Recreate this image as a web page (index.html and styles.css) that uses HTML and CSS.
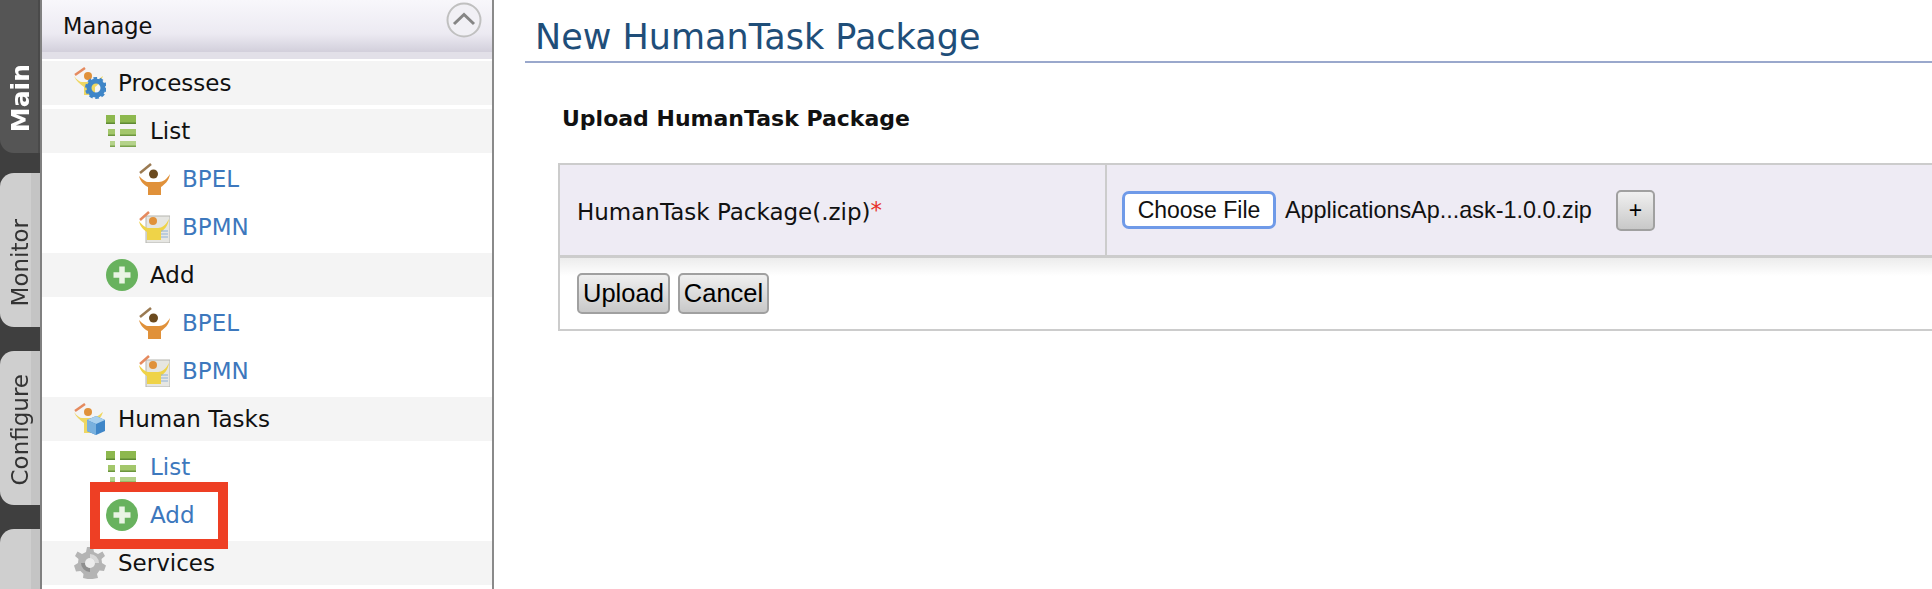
FILE: index.html
```html
<!DOCTYPE html>
<html lang="en">
<head>
    <meta charset="UTF-8">
    <meta name="viewport" content="width=device-width, initial-scale=1.0">
    <title>New HumanTask Package</title>
    <link rel="stylesheet" href="styles.css">
</head>
<body>
    <svg class="defs" width="0" height="0" aria-hidden="true">
        <defs>
            <symbol id="i-list" viewBox="0 0 32 32">
                <rect x="0" y="0" width="9" height="9" fill="#8db84e"/>
                <rect x="14" y="0" width="16" height="9" fill="#8db84e"/>
                <rect x="0" y="7.500" width="9" height="1.500" fill="#5f8a35"/>
                <rect x="14" y="7.500" width="16" height="1.500" fill="#5f8a35"/>
                <rect x="2" y="14" width="7" height="7" fill="#a3c76b"/>
                <rect x="14" y="14" width="16" height="7" fill="#a3c76b"/>
                <rect x="2" y="19.500" width="7" height="1.500" fill="#6c963e"/>
                <rect x="14" y="19.500" width="16" height="1.500" fill="#6c963e"/>
                <rect x="4" y="26" width="5" height="6" fill="#b4d28a"/>
                <rect x="14" y="26" width="16" height="6" fill="#b4d28a"/>
                <rect x="4" y="30.500" width="5" height="1.500" fill="#7ba34d"/>
                <rect x="14" y="30.500" width="16" height="1.500" fill="#7ba34d"/>
            </symbol>
            <symbol id="i-add" viewBox="0 0 32 32">
                <circle cx="16" cy="16" r="16" fill="#68b25e"/>
                <path d="M16 7.500V24.500M7.500 16H24.500" stroke="#e9f4e4" stroke-width="5.500"/>
            </symbol>
            <symbol id="i-bpel" viewBox="0 0 32 32">
                <path d="M2 10L13 1" stroke="#9a7a52" stroke-width="2.500"/>
                <circle cx="15.500" cy="11" r="4.500" fill="#6b4a1e"/>
                <path d="M1 13C5 17 8 19 10 19H21C25 19 29 16 32 11C31 18 26 22 23 24V32H10V24C6 22 2 18 1 13Z" fill="#e0913a"/>
            </symbol>
            <symbol id="i-bpmn" viewBox="0 0 32 32">
                <rect x="8" y="5" width="24" height="27" fill="#e6e6e2" stroke="#b5b5b0"/>
                <path d="M2 9L11 1" stroke="#e58a5e" stroke-width="2.500"/>
                <circle cx="15" cy="10" r="4" fill="#e0913a"/>
                <path d="M1 10C4 14 8 17 10 17H20C24 17 28 14 31 8C30 15 26 19 23 21V29H9V21C6 19 2 16 1 10Z" fill="#efd348"/>
                <path d="M23 20H30M23 23H30M23 26H30" stroke="#8fb2d6" stroke-width="1.200"/>
            </symbol>
            <symbol id="i-proc" viewBox="0 0 32 32">
                <path d="M1 8L11 1" stroke="#e58a5e" stroke-width="2.500"/>
                <circle cx="14" cy="9" r="4" fill="#e0913a"/>
                <path d="M0 9C3 13 6 15 8 15H18C22 15 25 12 29 9C27 15 24 18 21 20V28H10V20C6 17 2 14 0 9Z" fill="#efd761"/>
                <circle cx="22" cy="21" r="7" fill="none" stroke="#3f86c8" stroke-width="5"/>
                <circle cx="22" cy="21" r="9.500" fill="none" stroke="#3f86c8" stroke-width="3" stroke-dasharray="3.500 2.500"/>
            </symbol>
            <symbol id="i-task" viewBox="0 0 32 32">
                <path d="M1 8L11 1" stroke="#e58a5e" stroke-width="2.500"/>
                <circle cx="14" cy="9" r="4" fill="#e0913a"/>
                <path d="M0 9C3 13 6 15 8 15H18C22 15 25 12 29 9C27 15 24 18 21 20V30H10V20C6 17 2 14 0 9Z" fill="#efd761"/>
                <path d="M22 13L31 17V28L22 32L13 28V17Z" fill="#3f86c8"/>
                <path d="M22 13L31 17L22 21L13 17Z" fill="#a9d0ee"/>
                <path d="M13 17L22 21V32L13 28Z" fill="#78b0de"/>
            </symbol>
            <symbol id="i-gear" viewBox="0 0 32 32">
                <path d="M13 0H19L20 5L24 7L28.500 4.500L31 9L27.500 12L28 16L32 18.500L30 24L25.500 23.500L23 27L24 31L18.500 32H13.500L9 31L9.500 27L6.500 24L2 24.500L0 18.500L4 16L4.500 12L1 9L3.500 4.500L8 7L12 5Z" fill="#b4b4b4"/>
                <path d="M16 7A9 9 0 0 1 25 16H21A5 5 0 0 0 16 11Z" fill="#d8d8d8"/>
                <path d="M16 25A9 9 0 0 1 7 16H11A5 5 0 0 0 16 21Z" fill="#8e8e8e"/>
                <circle cx="16" cy="16" r="5" fill="#ececec"/>
            </symbol>
        </defs>
    </svg>

    <div class="pagina">
        <nav class="pestanas">
            <a class="pestana activa"><span>Main</span></a>
            <a class="pestana monitor"><span>Monitor</span></a>
            <a class="pestana configure"><span>Configure</span></a>
            <a class="pestana"></a>
        </nav>

        <aside class="menu">
            <div class="menu-cabecera">
                <span>Manage</span>
                <svg class="plegar" width="36" height="36" viewBox="0 0 36 36">
                    <circle cx="18" cy="18" r="16.500" fill="#f1f0f5" stroke="#c0c0c0" stroke-width="2"/>
                    <path d="M8 22L18 12.500L28 22" fill="none" stroke="#858585" stroke-width="3"/>
                </svg>
            </div>
            <div class="menu-linea"></div>
            <ul class="arbol">
                <li class="fila nivel1 gris"><svg class="icono"><use href="#i-proc"/></svg>Processes</li>
                <li class="fila nivel2 gris"><svg class="icono"><use href="#i-list"/></svg>List</li>
                <li class="fila nivel3 enlace"><svg class="icono"><use href="#i-bpel"/></svg>BPEL</li>
                <li class="fila nivel3 enlace"><svg class="icono"><use href="#i-bpmn"/></svg>BPMN</li>
                <li class="fila nivel2 gris"><svg class="icono"><use href="#i-add"/></svg>Add</li>
                <li class="fila nivel3 enlace"><svg class="icono"><use href="#i-bpel"/></svg>BPEL</li>
                <li class="fila nivel3 enlace"><svg class="icono"><use href="#i-bpmn"/></svg>BPMN</li>
                <li class="fila nivel1 gris"><svg class="icono"><use href="#i-task"/></svg>Human Tasks</li>
                <li class="fila nivel2 enlace"><svg class="icono"><use href="#i-list"/></svg>List</li>
                <li class="fila nivel2 enlace"><svg class="icono"><use href="#i-add"/></svg>Add</li>
                <li class="fila nivel1 gris"><svg class="icono"><use href="#i-gear"/></svg>Services</li>
            </ul>
            <div class="marca"></div>
        </aside>

        <main class="contenido">
            <h1>New HumanTask Package</h1>
            <h2>Upload HumanTask Package</h2>
            <form class="caja">
                <div class="caja-fila">
                    <div class="etiqueta">HumanTask Package(.zip)<span class="requerido">*</span></div>
                    <div class="campo">
                        <button type="button" class="elegir">Choose File</button>
                        <span class="archivo">ApplicationsAp...ask-1.0.0.zip</span>
                        <button type="button" class="boton mas">+</button>
                    </div>
                </div>
                <div class="caja-botones">
                    <button type="button" class="boton">Upload</button>
                    <button type="button" class="boton">Cancel</button>
                </div>
            </form>
        </main>
    </div>
</body>
</html>
```

FILE: styles.css
```css
html, body {
    margin: 0;
    height: 100%;
    overflow: hidden;
    background: #fff;
}

.defs {
    position: absolute;
}

.pagina {
    display: flex;
    height: 589px;
    overflow: hidden;
    font-family: "DejaVu Sans", sans-serif;
    color: #111;
}

/* pestañas verticales */
.pestanas {
    width: 40px;
    flex: none;
    display: flex;
    flex-direction: column;
    gap: 24px;
    overflow: hidden;
    background: #3f3f3f;
    border-right: 2px solid #808080;
}

.pestana {
    height: 154px;
    flex: none;
    display: flex;
    align-items: center;
    justify-content: center;
    box-sizing: border-box;
    border-radius: 14px 0 0 14px;
    background: linear-gradient(90deg, #cfcfcf 0 31px, #c4c4c4 31px);
    color: #333;
    font-size: 23px;
}

.pestana span {
    writing-mode: vertical-rl;
    transform: rotate(180deg);
}

.activa {
    height: 153px;
    margin-bottom: -4px;
    padding-top: 43px;
    border-radius: 0 0 0 14px;
    background: linear-gradient(90deg, #555 0 38px, #4a4a4a 38px);
    color: #fff;
    font-size: 25px;
    font-weight: bold;
}

.monitor {
    padding-top: 26px;
}

.configure {
    padding-top: 4px;
}

/* menú lateral */
.menu {
    position: relative;
    width: 450px;
    flex: none;
    border-right: 2px solid #8a8a8a;
}

.menu-cabecera {
    height: 52px;
    display: flex;
    align-items: center;
    justify-content: space-between;
    padding: 0 10px 0 21px;
    background: linear-gradient(#f8f7fb, #eceaf2 65%, #d2cfdb);
    font-size: 22.5px;
}

.plegar {
    margin-bottom: 12px;
}

.menu-linea {
    height: 7px;
    margin-bottom: 2px;
    background: #e2e0e8;
}

.arbol {
    list-style: none;
    margin: 0;
    padding: 0;
}

.fila {
    height: 44px;
    margin-bottom: 4px;
    display: flex;
    align-items: center;
    gap: 12px;
    font-size: 23px;
}

.nivel1 { padding-left: 32px; }
.nivel2 { padding-left: 64px; }
.nivel3 { padding-left: 96px; }

.gris {
    background: #f4f4f4;
}

.enlace {
    color: #3d78bd;
}

.icono {
    width: 32px;
    height: 32px;
    flex: none;
    filter: blur(0.4px);
}

/* recuadro rojo de la captura */
.marca {
    position: absolute;
    left: 48px;
    top: 482px;
    width: 118px;
    height: 47px;
    border: 10px solid #ee3f24;
}

/* contenido */
.contenido {
    flex: 1;
    min-width: 0;
    padding-left: 31px;
}

h1 {
    margin: 13px 0 0;
    height: 48px;
    padding-left: 10px;
    border-bottom: 2px solid #9aa8cc;
    font-size: 35px;
    font-weight: normal;
    line-height: 48px;
    color: #1f4e79;
}

h2 {
    margin: 42px 0 0 37px;
    font-size: 22px;
    line-height: 28px;
    color: #111;
}

.caja {
    margin: 30px 0 0 33px;
    border: 2px solid #ccc;
    border-right: 0;
}

.caja-fila {
    display: flex;
    height: 90px;
    background: #eeebf4;
    border-bottom: 3px solid #ccc;
}

.etiqueta {
    width: 528px;
    flex: none;
    display: flex;
    align-items: center;
    box-sizing: content-box;
    padding: 3px 0 0 17px;
    border-right: 2px solid #ccc;
    font-size: 23px;
}

.requerido {
    color: #e8302a;
    align-self: flex-start;
    margin-top: 29px;
}

.campo {
    flex: 1;
    display: flex;
    align-items: center;
    padding-left: 15px;
    font-family: "Liberation Sans", sans-serif;
    font-size: 23.4px;
}

.elegir {
    width: 154px;
    height: 38px;
    padding: 0;
    white-space: nowrap;
    border: 3px solid #6f9ae8;
    border-radius: 7px;
    background: #fff;
    font: inherit;
    font-size: 23px;
    color: #111;
}

.archivo {
    margin-left: 9px;
}

.boton {
    height: 41px;
    padding: 0 4px;
    border: 2px solid #a0a0a0;
    border-radius: 5px;
    background: linear-gradient(#f0f0f0, #c8c8c8);
    font-family: "Liberation Sans", sans-serif;
    font-size: 25.5px;
    color: #000;
}

.mas {
    width: 39px;
    margin-left: 24px;
    padding: 0;
    font-size: 23px;
}

.caja-botones {
    display: flex;
    gap: 8px;
    height: 71px;
    box-sizing: border-box;
    padding: 15px 0 0 17px;
    background: linear-gradient(#ececec, #fff 18px);
}
```
